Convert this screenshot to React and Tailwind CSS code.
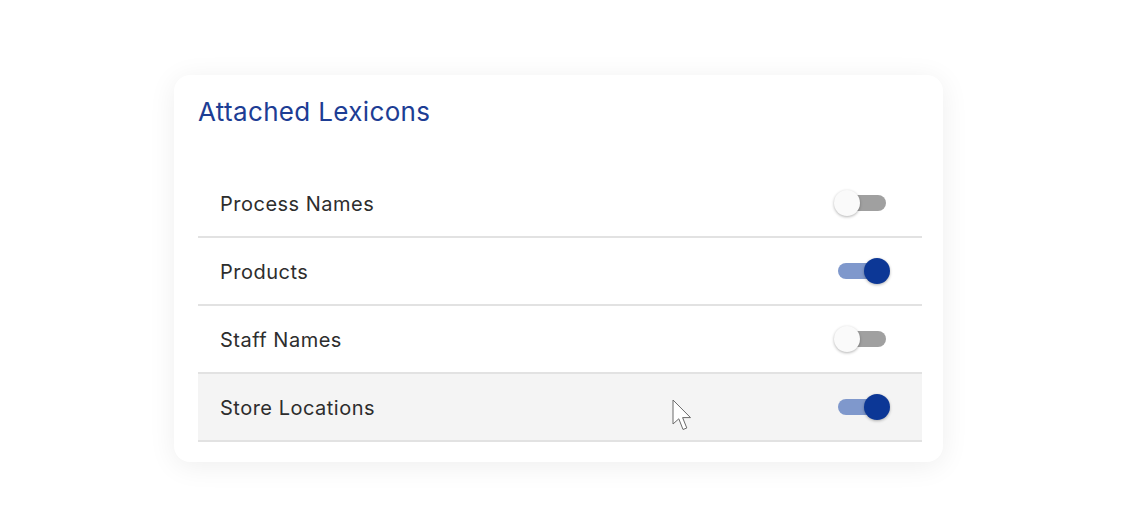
import React, { useState } from "react";

const initialLexicons = [
  { name: "Process Names", on: false },
  { name: "Products", on: true },
  { name: "Staff Names", on: false },
  { name: "Store Locations", on: true },
];

const Toggle = ({ on, onChange }) => (
  <button
    type="button"
    onClick={onChange}
    className="relative w-[56px] h-[28px] shrink-0"
  >
    <span
      className={`absolute left-[4px] right-[4px] top-[6px] h-[16px] rounded-full ${
        on ? "bg-[#7f98cc]" : "bg-[#a0a0a0]"
      }`}
    />
    <span
      className={`absolute top-[1px] w-[26px] h-[26px] rounded-full shadow-[0_1px_3px_rgba(0,0,0,0.3)] ${
        on ? "right-0 bg-[#0c3796]" : "left-0 bg-[#fafafa]"
      }`}
    />
  </button>
);

const App = () => {
  const [lexicons, setLexicons] = useState(initialLexicons);

  const flip = (index) => {
    setLexicons(
      lexicons.map((item, i) => (i === index ? { ...item, on: !item.on } : item))
    );
  };

  return (
    <div className="w-[1143px] h-[518px] bg-white pt-[75px] pl-[174px] font-['Inter','Liberation_Sans',sans-serif]">
      <div className="w-[769px] rounded-[16px] bg-white pl-[24px] pr-[21px] pt-[19px] pb-[20px] shadow-[0_4px_28px_rgba(0,0,0,0.07)]">
        {/* header */}
        <h2 className="h-[36px] leading-[36px] text-[26px] tracking-[0.35px] text-[#1d3d94] mb-[40px]">
          Attached Lexicons
        </h2>

        {/* lexicon rows */}
        <div className="flex flex-col">
          {lexicons.map((item, index) => (
            <div
              key={item.name}
              className={`relative h-[68px] flex items-center justify-between pl-[22px] pr-[32px] border-b-2 border-[#e2e2e2] ${
                index === 3 ? "bg-[#f4f4f4]" : ""
              } ${index === 0 ? "h-[67px]" : ""}`}
            >
              <span className="pt-[2px] text-[20px] tracking-[0.5px] text-[#2d2d2d]">
                {item.name}
              </span>
              <Toggle on={item.on} onChange={() => flip(index)} />
              {index === 3 && (
                <svg
                  className="absolute left-[474px] top-[25px]"
                  width="22"
                  height="34"
                  viewBox="0 0 22 34"
                >
                  <path
                    d="M1 1 L1 25 L6.8 19.8 L11 30.5 L14.8 29 L10.6 18.6 L18.5 18.6 Z"
                    fill="#ffffff"
                    stroke="#6b6b6b"
                    strokeWidth="1"
                    strokeLinejoin="round"
                  />
                </svg>
              )}
            </div>
          ))}
        </div>
      </div>
    </div>
  );
};

export default App;
